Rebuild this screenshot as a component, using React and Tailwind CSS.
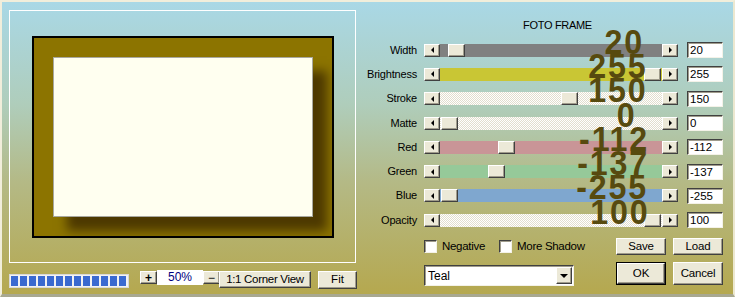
import React from "react";

const raised =
  "bg-[#ece9d8] border border-t-white border-l-white border-r-[#404040] border-b-[#404040] shadow-[inset_-1px_-1px_0_#a09c8c]";
const sunken =
  "bg-white border border-t-[#404040] border-l-[#404040] border-r-[#f4f2e8] border-b-[#f4f2e8] shadow-[inset_1px_1px_0_#a09c8c]";
const checker =
  "bg-[repeating-conic-gradient(#ffffff_0%_25%,#e2dece_0%_50%)] bg-[length:2px_2px]";

// end = x where the big number's ink stops, measured from the track's right edge
const rows = [
  { label: "Width", value: "20", track: "bg-[#808080]", thumb: 8, end: 21 },
  { label: "Brightness", value: "255", track: "bg-[#c9c634]", thumb: 204, end: 18 },
  { label: "Stroke", value: "150", track: checker, thumb: 121, end: 18 },
  { label: "Matte", value: "0", track: checker, thumb: 1, end: 29 },
  { label: "Red", value: "-112", track: "bg-[#c99597]", thumb: 58, end: 16 },
  { label: "Green", value: "-137", track: "bg-[#96c999]", thumb: 48, end: 16 },
  { label: "Blue", value: "-255", track: "bg-[#7fa7cf]", thumb: 1, end: 17 },
  { label: "Opacity", value: "100", track: checker, thumb: 204, end: 16 },
];

const Arrow = ({ dir }) => (
  <div className={`w-[16px] h-[13px] flex items-center justify-center ${raised}`}>
    {dir === "left" ? (
      <div className="w-0 h-0 border-y-[3px] border-y-transparent border-r-[3px] border-r-black" />
    ) : (
      <div className="w-0 h-0 border-y-[3px] border-y-transparent border-l-[3px] border-l-black" />
    )}
  </div>
);

const SliderRow = ({ label, value, track, thumb, end }) => (
  <div className="flex items-center h-[24.3px]">
    <div className="w-[56px] text-right text-[11px] tracking-[-0.2px] text-black leading-none">
      {label}
    </div>
    <div className="ml-[7px] flex items-center">
      <Arrow dir="left" />
      <div className={`relative w-[222px] h-[13px] ${track}`}>
        <div
          className={`absolute top-0 w-[17px] h-[13px] ${raised}`}
          style={{ left: thumb }}
        />
        <div
          className="absolute bottom-[-2px] z-10 font-bold text-[35px] leading-none tracking-[2px] text-[#574a0f] whitespace-nowrap scale-x-[0.92] origin-right"
          style={{ right: end - 3 }}
        >
          {value}
        </div>
      </div>
      <Arrow dir="right" />
    </div>
    <div
      className={`ml-[9px] w-[36px] h-[16px] pl-[2px] text-[11.5px] leading-[14px] text-black ${sunken}`}
    >
      {value}
    </div>
  </div>
);

const Checkbox = ({ label, width }) => (
  <div className={`flex items-center ${width}`}>
    <div className={`w-[13px] h-[13px] ${sunken}`} />
    <span className="ml-[5px] text-[11.5px] tracking-[-0.3px] text-black">{label}</span>
  </div>
);

export default function App() {
  return (
    <div className="w-[735px] h-[297px] overflow-hidden font-['Liberation_Sans',Arial,sans-serif] border-t-2 border-l-2 border-r-2 border-b-[3px] border-t-[#f1eedb] border-l-[#f1eedb] border-r-[#ece8d0] border-b-[#a8a890] bg-[linear-gradient(180deg,#a9d8e6_0%,#afcdbb_35%,#b4b985_62%,#b5a84f_100%)] flex">
      {/* left: preview */}
      <div className="pl-[7px] pt-[8px] flex flex-col">
        <div className="w-[347px] h-[253px] border border-white flex items-center justify-center">
          <div className="w-[302px] h-[202px] border-2 border-black bg-[#8c7400] overflow-hidden flex items-center justify-center">
            <div className="w-[260px] h-[160px] bg-[#fffff0] border border-[#a8a8a0] shadow-[14px_14px_10px_#4d3900]" />
          </div>
        </div>
        <div className="mt-[7px] flex items-start">
          <div className="mt-[4px] w-[120px] h-[14px] bg-[#f2f2f2] border border-[#d8d8d8] pl-[1px] pt-[1px] flex gap-[2px]">
            {Array.from({ length: 13 }).map((_, i) => (
              <div key={i} className="w-[7px] h-[10px] bg-[#3a6ad0]" />
            ))}
          </div>
          <div className={`ml-[11px] mt-[1px] w-[17px] h-[13px] flex items-center justify-center text-[12px] font-bold leading-none ${raised}`}>
            +
          </div>
          <div className="w-[46px] h-[15px] bg-white text-center text-[12px] leading-[14px] text-[#000080]">
            50%
          </div>
          <div className={`mt-[1px] w-[17px] h-[13px] flex items-center justify-center text-[12px] leading-none ${raised}`}>
            −
          </div>
          <div className={`-ml-[1px] mt-[1px] w-[92px] h-[17px] flex items-center justify-center text-[11.5px] tracking-[-0.3px] ${raised}`}>
            1:1 Corner View
          </div>
          <div className={`ml-[7px] mt-[1px] w-[39px] h-[18px] flex items-center justify-center text-[11.5px] ${raised}`}>
            Fit
          </div>
        </div>
      </div>

      {/* right: controls */}
      <div className="ml-[4px] pt-[17px] flex flex-col">
        <div className="pl-[162px] h-[13px] text-[11px] tracking-[-0.3px] leading-[13px] text-black">
          FOTO FRAME
        </div>
        <div className="mt-[6px] flex flex-col">
          {rows.map((r) => (
            <SliderRow key={r.label} {...r} />
          ))}
        </div>
        <div className="mt-[6px] flex items-center h-[17px]">
          <div className="w-[63px]" />
          <Checkbox label="Negative" width="w-[75px]" />
          <Checkbox label="More Shadow" width="w-[117px]" />
          <div className={`w-[50px] h-[17px] flex items-center justify-center text-[11.5px] tracking-[-0.2px] ${raised}`}>
            Save
          </div>
          <div className={`ml-[7px] w-[50px] h-[17px] flex items-center justify-center text-[11.5px] tracking-[-0.2px] ${raised}`}>
            Load
          </div>
        </div>
        <div className="mt-[7px] flex items-start">
          <div className="w-[63px]" />
          <div className={`mt-[3px] w-[150px] h-[21px] flex items-center justify-between pl-[3px] pr-[1px] ${sunken}`}>
            <span className="text-[12px] text-black">Teal</span>
            <div className={`w-[16px] h-[17px] flex items-center justify-center ${raised}`}>
              <div className="w-0 h-0 border-x-[4px] border-x-transparent border-t-[4px] border-t-black" />
            </div>
          </div>
          <div className="ml-[42px] w-[50px] h-[23px] border border-black">
            <div className={`w-full h-full flex items-center justify-center text-[11.5px] ${raised}`}>
              OK
            </div>
          </div>
          <div className={`ml-[7px] w-[50px] h-[23px] flex items-center justify-center text-[11.5px] tracking-[-0.2px] ${raised}`}>
            Cancel
          </div>
        </div>
      </div>
    </div>
  );
}
